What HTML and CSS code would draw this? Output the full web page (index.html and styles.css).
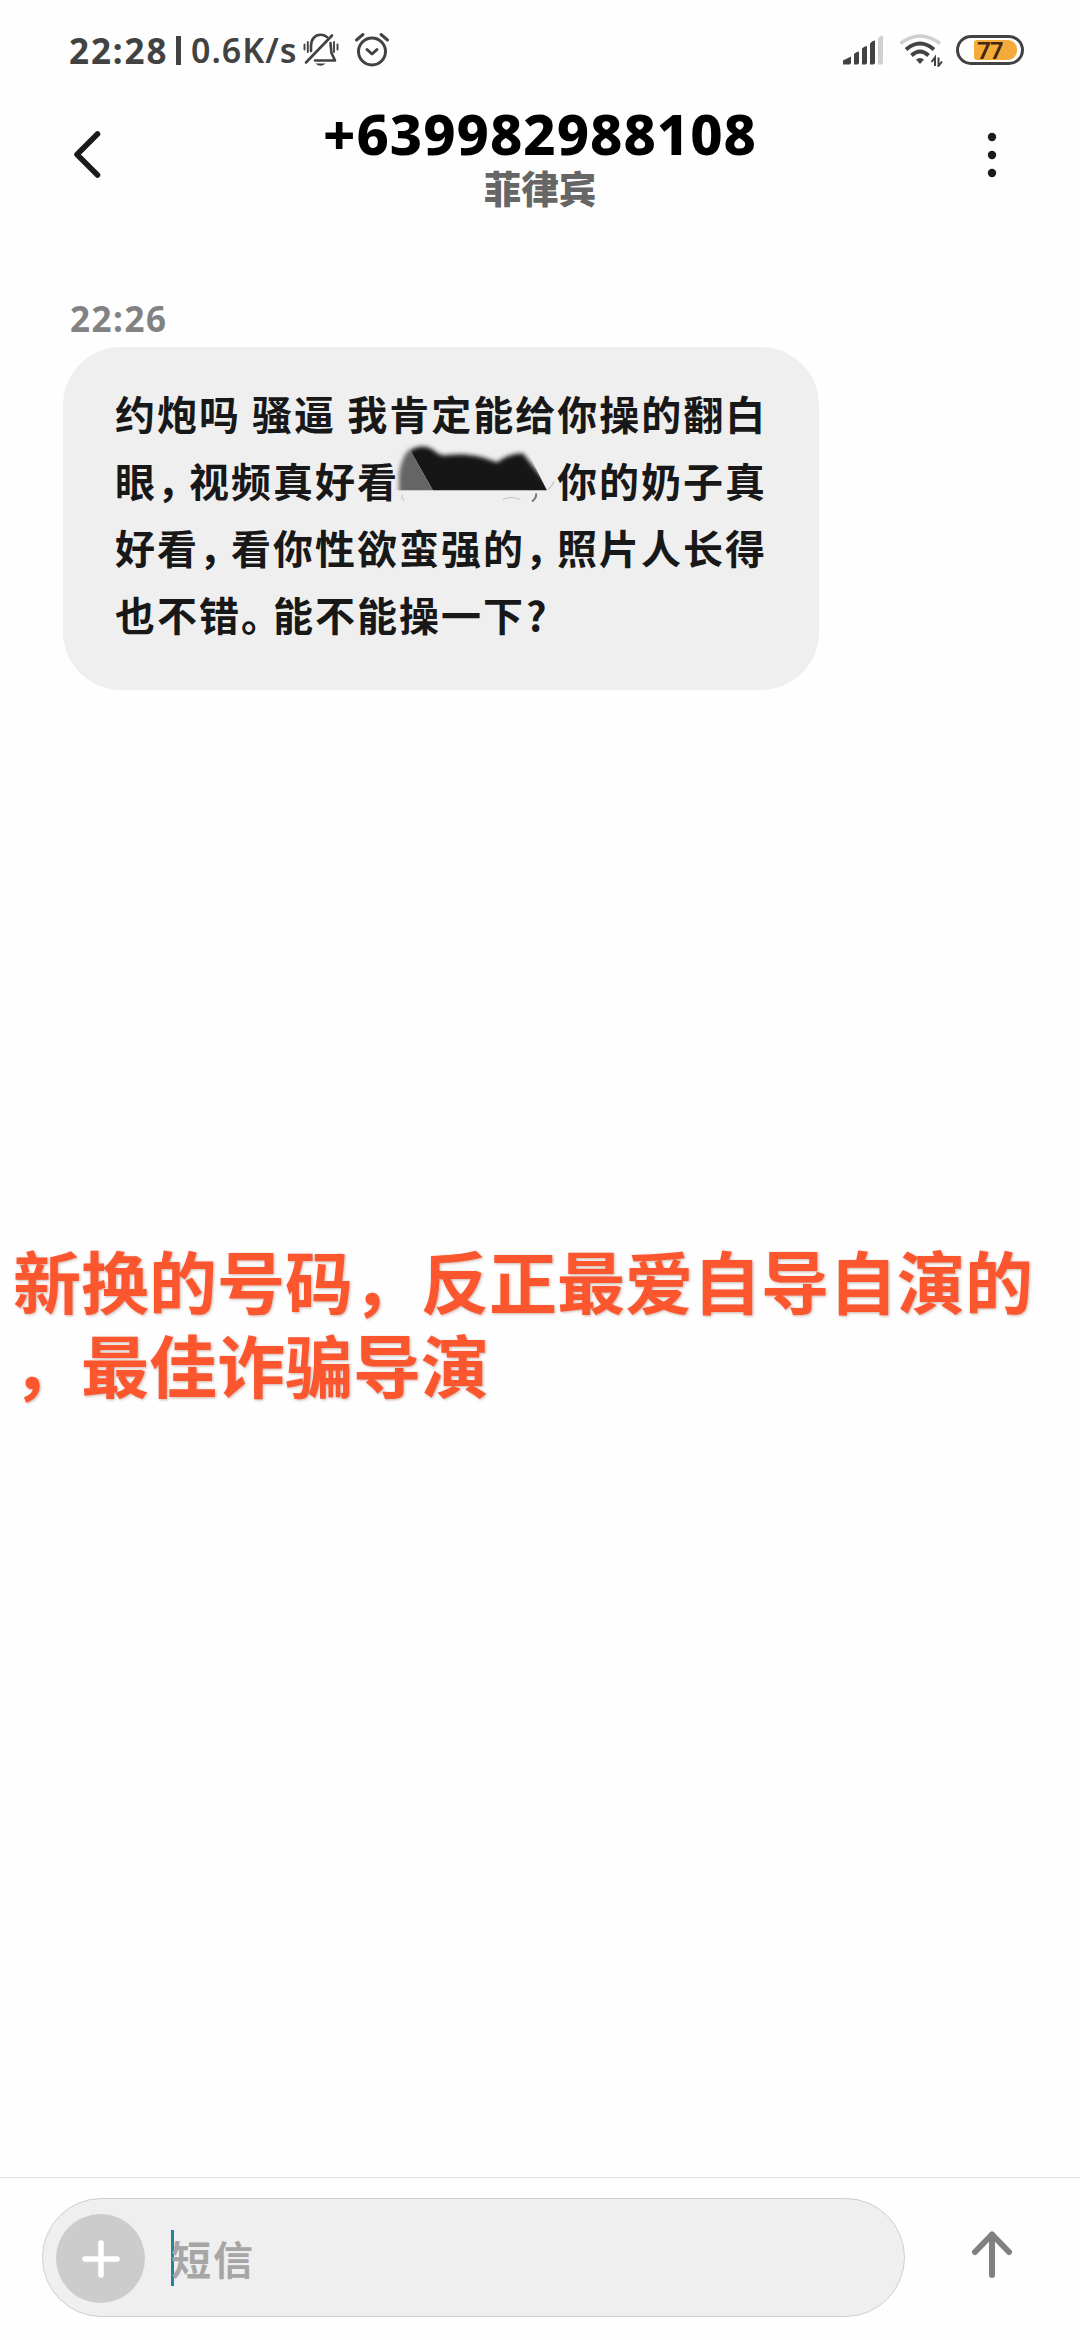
FILE: index.html
```html
<!DOCTYPE html>
<html lang="zh-CN">
<head>
<meta charset="utf-8">
<title>短信</title>
<link rel="stylesheet" href="styles.css">
</head>
<body>
<div class="screen">
  <div class="status">
    <span class="clock">22:28</span>
    <span class="divider"></span>
    <span class="speed">0.6K/s</span>
    <svg class="bell" width="36" height="36" viewBox="0 0 36 36" fill="none" stroke="#424242" stroke-width="2.6" stroke-linecap="round" stroke-linejoin="round">
      <path d="M3 30.500 29 3.500M8 19V14C8 7 12 2.800 17.500 2.800 20 2.800 22 3.500 24 5M27.500 11C28 15 28 18 28.500 21L32 28.500H12"/>
      <path d="M1.500 12.500v5M4.800 10v10M31 10v10M34.500 12.500v5" stroke-width="1.900"/>
      <path d="M12.500 31.500h10Q17.500 36 12.500 31.500z" fill="#424242" stroke="none"/>
    </svg>
    <svg class="alarm" width="36" height="36" viewBox="0 0 36 36" fill="none" stroke="#424242" stroke-width="3" stroke-linecap="round" stroke-linejoin="round">
      <circle cx="18" cy="19.500" r="13.500"/>
      <path d="M13 17.500 18 22l5-4.500M2.500 8 9 2.500M33.500 8 27 2.500"/>
    </svg>
    <svg class="signal" width="42" height="32" viewBox="0 0 42 32" fill="#424242">
      <path d="M1 30.500V26.500L9 22.500V28.500Q9 30.500 7 30.500z"/>
      <path d="M12 30.500V20Q14 17.500 17 17.500V28.500Q17 30.500 15 30.500z"/>
      <path d="M20 30.500V14.500Q22 12 25 12V28.500Q25 30.500 23 30.500z"/>
      <path d="M28 30.500V9.500Q30 6.500 33 6.500V28.500Q33 30.500 31 30.500z"/>
      <path d="M36 30.500V4.500Q38 1.500 41 1.500V28.500Q41 30.500 39 30.500z" fill="#d0d0d0"/>
    </svg>
    <svg class="wifi" width="44" height="34" viewBox="0 0 44 34" fill="none" stroke="#424242" stroke-width="4">
      <path d="M1.500 10.500Q21 -4.500 41 10.500" stroke="#d0d0d0" stroke-width="3.500"/>
      <path d="M7 16.500Q21 4.500 35 16.500M12.500 22.500Q21 14.500 29.500 22.500"/>
      <path d="M17 26.500Q21 23.500 25 26.500L21 31z" fill="#424242" stroke="none"/>
      <path d="M36 33V24.500L32.500 29M39.500 24.500V33L43 28.500" stroke-width="2"/>
    </svg>
    <div class="battery"><span class="charge">77</span></div>
  </div>

  <div class="header">
    <svg class="back" width="32" height="52" viewBox="0 0 32 52" fill="none" stroke="#1a1a1a" stroke-width="5.500" stroke-linecap="round" stroke-linejoin="round"><path d="M26.500 5 6 25.500 26.500 46"/></svg>
    <div class="contact">
      <div class="number">+639982988108</div>
      <div class="region">菲律宾</div>
    </div>
    <svg class="more" width="10" height="46" viewBox="0 0 10 46" fill="#1a1a1a"><circle cx="5" cy="5" r="4.200"/><circle cx="5" cy="23" r="4.200"/><circle cx="5" cy="41" r="4.200"/></svg>
  </div>

  <div class="thread">
    <div class="time">22:26</div>
    <div class="bubble">
      <div class="line">约炮吗 骚逼 我肯定能给你操的翻白</div>
      <div class="line">眼<span class="mark">，</span>视频真好看<svg class="redaction" width="158" height="67" viewBox="400 446.500 158 67">
        <defs>
          <filter id="soft" x="-10%" y="-20%" width="120%" height="140%"><feGaussianBlur stdDeviation="2.200"/></filter>
          <clipPath id="black"><path d="M400 430H518L548 490H434z"/></clipPath>
          <clipPath id="grey"><path d="M390 430H400L434 490H390z"/></clipPath>
        </defs>
        <g clip-path="url(#black)">
          <path d="M401 510V470C404 450 416 446 424 446 434 446 438 455 445 455 464 453 478 454 498 462 508 455 515 453 524 453L570 510z" fill="#181818" filter="url(#soft)"/>
        </g>
        <g clip-path="url(#grey)">
          <path d="M400 510V474C402 460 406 452 412 448L450 446V510z" fill="#656565" filter="url(#soft)"/>
        </g>
        <g fill="none" stroke="#c4c4c4" stroke-width="1.200"><path d="M403 494v3l2 3M504 499q8-4 17 0M549 489q4-3 6-8"/><path d="M537 493q1 4-4 8" stroke="#777" stroke-width="2"/></g>
      </svg>你的奶子真</div>
      <div class="line">好看<span class="mark">，</span>看你性欲蛮强的<span class="mark">，</span>照片人长得</div>
      <div class="line">也不错<span class="mark">。</span>能不能操一下<span class="question">?</span></div>
    </div>
    <div class="caption">新换的号码，反正最爱自导自演的<br>，最佳诈骗导演</div>
  </div>

  <div class="composer">
    <div class="field">
      <div class="add"><svg width="40" height="40" viewBox="0 0 40 40" stroke="#fff" stroke-width="5.500" stroke-linecap="round"><path d="M20 4v32M4 20h32"/></svg></div>
      <span class="caret"></span>
      <span class="placeholder">短信</span>
    </div>
    <svg class="send" width="42" height="48" viewBox="0 0 42 48" fill="none" stroke="#808080" stroke-width="6" stroke-linecap="round" stroke-linejoin="round"><path d="M21 44V3.500M4 21 21 3.500 38 21"/></svg>
  </div>
</div>
</body>
</html>
```
FILE: styles.css
```css
* { box-sizing: border-box; }
body { margin: 0; background: #fefefe; font-family: "Noto Sans", "Noto Sans CJK SC", sans-serif; }
svg { display: block; flex: none; }
.screen { width: 1080px; height: 2340px; display: flex; flex-direction: column; overflow: hidden; }

.status { height: 100px; padding: 0 56px 0 69px; display: flex; align-items: center; color: #424242; white-space: nowrap; }
.clock { width: 107px; font-size: 35px; font-weight: 700; letter-spacing: 1.9px; }
.divider { width: 5px; height: 29px; background: #424242; }
.speed { width: 122px; padding-left: 10px; font-size: 34px; font-weight: 600; letter-spacing: 1px; }
.alarm { margin-left: 15px; }
.signal { margin-left: auto; }
.wifi { margin-left: 15px; }
.battery { width: 68px; height: 30px; margin-left: 13px; border: 3.500px solid #424242; border-radius: 15px; padding: 2px 4px 2px 15px; display: flex; }
.charge { flex: 1; display: flex; align-items: center; padding-left: 3px; background: #f4ab3b; border-radius: 3px 9px 9px 3px; color: #3d2810; font-size: 24px; font-weight: 600; letter-spacing: -1px; line-height: 18px; }

.header { height: 120px; padding: 0 83px 0 71px; display: flex; justify-content: space-between; align-items: flex-start; }
.back { margin-top: 29px; }
.more { margin-top: 32px; }
.contact { display: flex; flex-direction: column; align-items: center; margin: -1px 0 0 -10px; }
.number { height: 68px; line-height: 68px; font-size: 56px; font-weight: 800; color: #000; letter-spacing: 1px; }
.region { height: 42px; margin-top: -1px; font: 900 37.500px/42px "Noto Sans CJK SC", sans-serif; color: #666; }

.thread { flex: 1; padding: 77px 0 0 63px; }
.time { height: 50px; padding-left: 7px; line-height: 43px; font-size: 35px; font-weight: 700; letter-spacing: 1.500px; color: #828282; }
.bubble { width: 756px; height: 343px; padding: 32.500px 52px 0; border-radius: 58px; background: #efefef; color: #181818; font-family: "Noto Sans CJK SC", sans-serif; font-weight: 700; font-size: 40px; letter-spacing: 2px; }
.line { height: 67px; line-height: 67px; display: flex; white-space: pre; }
.mark { width: 32px; font-feature-settings: "halt"; }
.question { padding-left: 1px; }
.redaction { overflow: visible; }
.caption { margin: 548px 0 0 -50px; color: #fb562e; font: 700 68px/84px "Noto Sans CJK SC", sans-serif; text-shadow: 1px 1px 3px rgba(130, 60, 40, .4); white-space: nowrap; }

.composer { height: 163px; border-top: 1px solid #dedede; padding: 20px 67px 0 42px; display: flex; justify-content: space-between; align-items: flex-start; }
.field { width: 863px; height: 119px; padding-left: 13px; border: 1px solid #cfcfcf; border-radius: 60px; background: #efefef; display: flex; align-items: center; }
.add { width: 89px; height: 89px; margin-top: 2px; border-radius: 50%; background: #ccc; display: flex; align-items: center; justify-content: center; }
.caret { width: 3px; height: 56px; margin-left: 26px; background: #2583a0; }
.placeholder { margin-left: -3px; font: 700 40px/56px "Noto Sans CJK SC", sans-serif; letter-spacing: 2px; color: #a6a6a6; }
.send { margin-top: 33px; }
```
